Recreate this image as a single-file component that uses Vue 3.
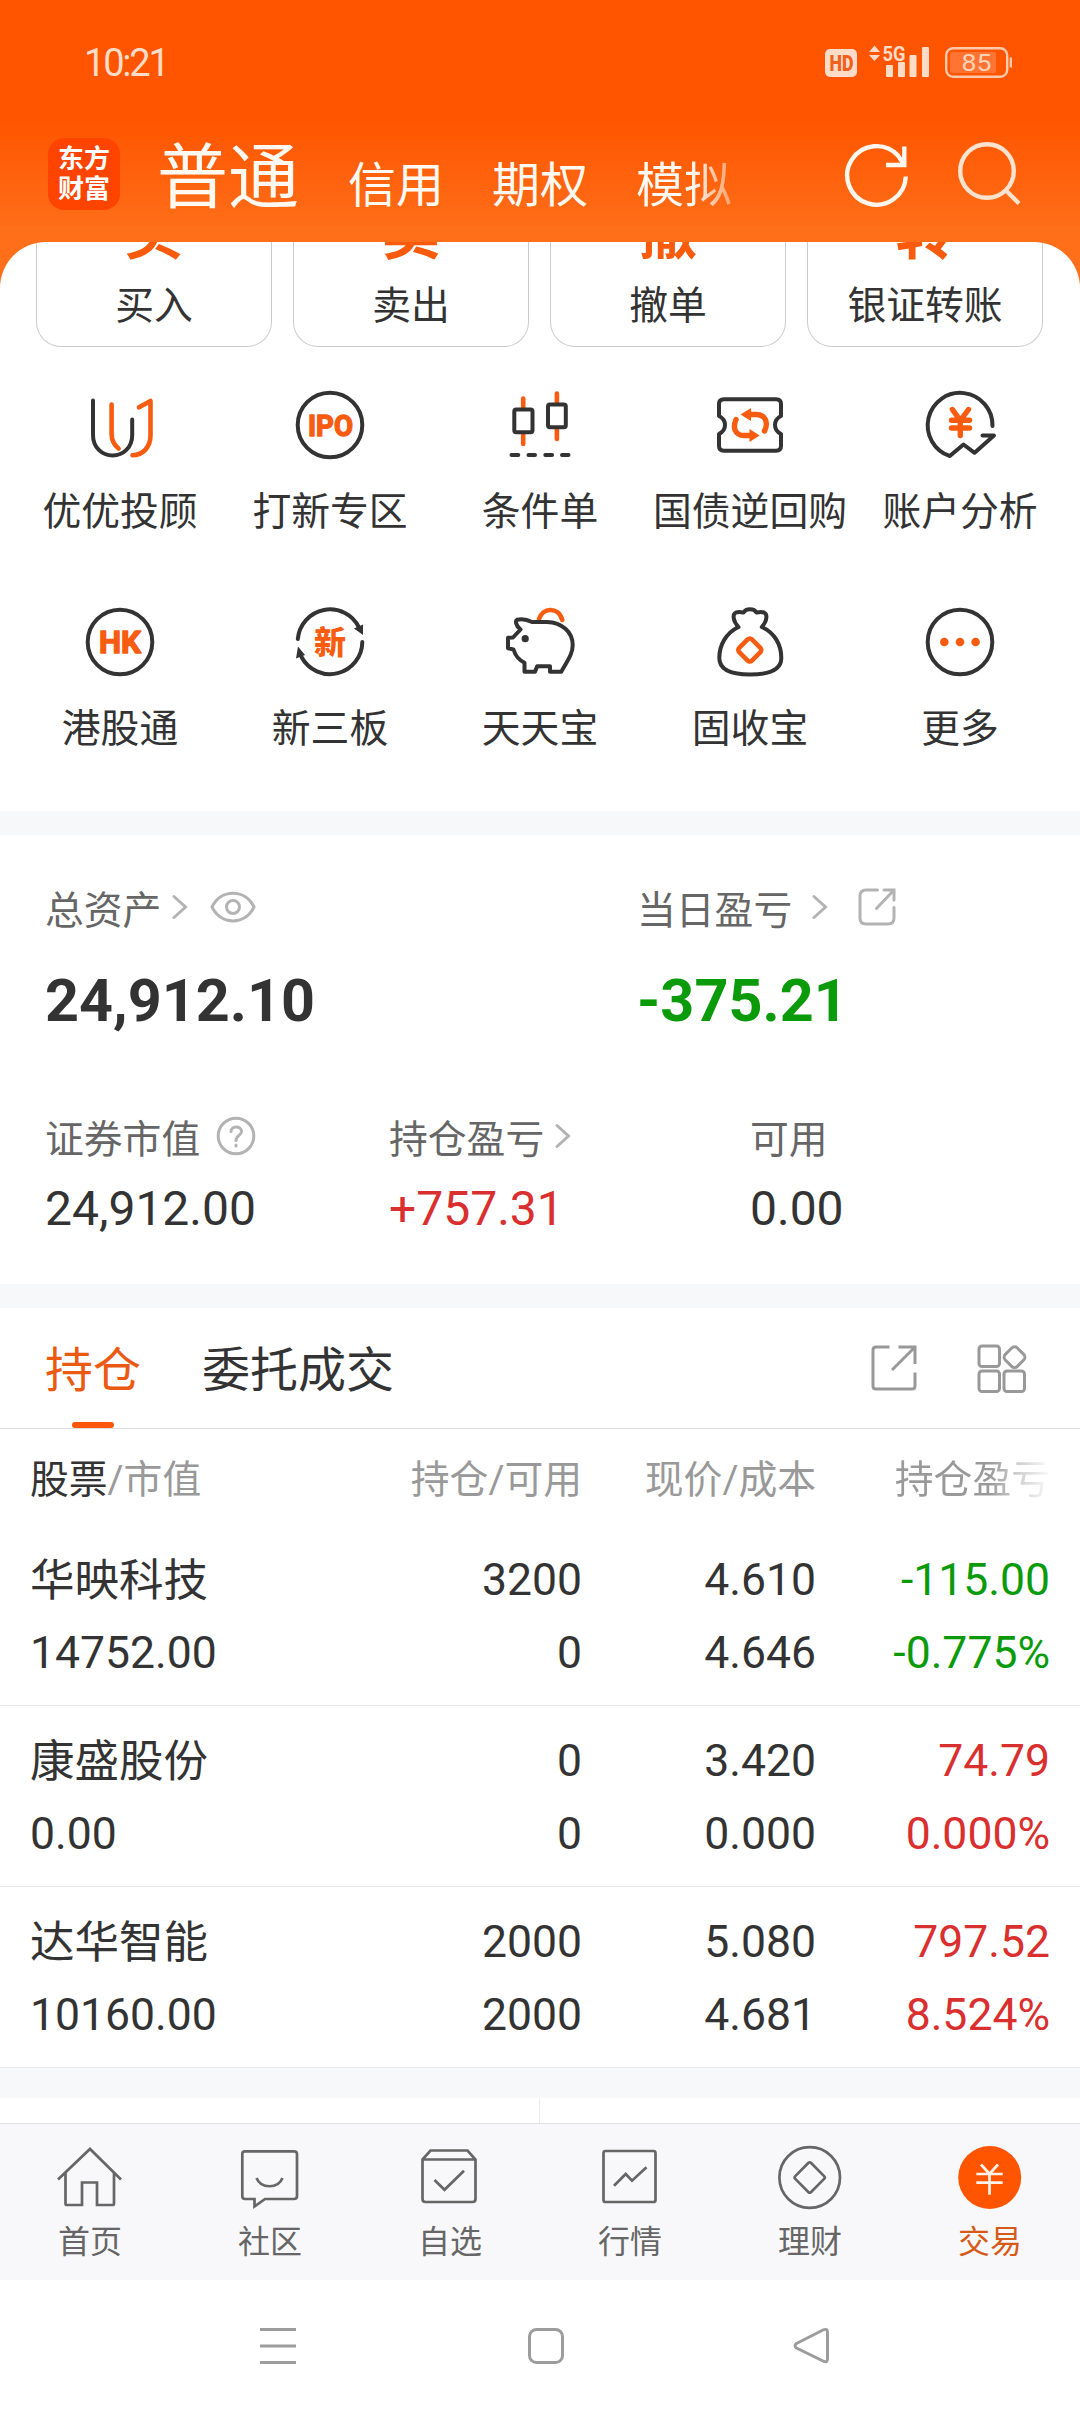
<template>
  <div class="page">
    <header class="top">
      <div class="status">
        <span class="time">10:21</span>
        <svg class="status-icons" width="190" height="40" viewBox="824 42 190 40">
          <rect x="825" y="49" width="32" height="28" rx="5" fill="#ffdcc8" />
          <text x="829.5" y="71" font-size="22" font-weight="900" fill="#f0601c" textLength="24" lengthAdjust="spacingAndGlyphs">HD</text>
          <path d="M869 52l5.5-6.5 5.5 6.5zM869 55h11l-5.500 6z" fill="#ffdcc8" />
          <text x="882.500" y="60.500" font-size="21" font-weight="700" fill="#ffdcc8" textLength="23" lengthAdjust="spacingAndGlyphs">5G</text>
          <g fill="#ffdcc8">
            <rect x="886" y="65" width="7" height="12" rx="1" />
            <rect x="898" y="62" width="7" height="15" rx="1" />
            <rect x="909.500" y="55" width="7" height="22" rx="1" />
            <rect x="922" y="47" width="7" height="30" rx="1" />
          </g>
          <rect x="946.200" y="48.200" width="61" height="28.600" rx="7" fill="none" stroke="#ffc9ab" stroke-width="2.400" />
          <rect x="950" y="52" width="46" height="21" rx="2" fill="#ff7433" />
          <path d="M1010.800 57.500v10" stroke="#ffc9ab" stroke-width="2.400" />
          <text x="961.500" y="71" font-size="24.500" fill="#ffd2b8" textLength="30" lengthAdjust="spacingAndGlyphs">85</text>
        </svg>
      </div>
      <div class="bar">
        <div class="logo"><span>东方</span><span>财富</span></div>
        <nav class="modes">
          <span class="mode main">普通</span>
          <span class="mode">信用</span>
          <span class="mode">期权</span>
          <span class="mode fade">模拟</span>
        </nav>
        <svg class="refresh" width="70" height="70" viewBox="0 0 70 70" fill="none" stroke="#fff6ee" stroke-width="4.400">
          <path d="M64.800 36.500A29.300 29.300 0 1 1 57 15.500L62 23" />
          <path d="M63.300 6.500V25H45" />
        </svg>
        <svg class="search" width="70" height="70" viewBox="0 0 70 70" fill="none" stroke="#ffe3cf" stroke-width="4.400">
          <circle cx="34" cy="31" r="26.800" />
          <path d="M52.500 50L66 63.500" />
        </svg>
      </div>
    </header>

    <main class="body">
      <div class="cards">
        <div v-for="c in cards" :key="c.label" class="card">
          <span class="card-icon">{{ c.icon }}</span>
          <span class="card-label">{{ c.label }}</span>
        </div>
      </div>

      <div class="grid">
        <div class="cell">
          <svg class="ico" viewBox="0 0 80 80">
            <path class="dark" d="M13 15.500V50C13 62.500 22 70.500 32.600 70.500S52.200 62.500 52.200 50V34.500" />
            <path class="hot" d="M31.600 19.500V49c0 6.500 2.500 11 7 14.500M59 22.300l11.500-6.300v34.500C70.500 62 63 70 52.500 70.300" />
          </svg>
          <span>优优投顾</span>
        </div>
        <div class="cell">
          <svg class="ico" viewBox="0 0 80 80">
            <circle class="dark" cx="40" cy="40" r="32.300" />
            <text class="glyph latin" x="18" y="50.700" font-size="30" textLength="45" lengthAdjust="spacingAndGlyphs">IPO</text>
          </svg>
          <span>打新专区</span>
        </div>
        <div class="cell">
          <svg class="ico" viewBox="0 0 80 80">
            <path class="hot wick" d="M23.200 13.500v10M23.200 49v10M56.900 8.500v10M56.900 44v10" />
            <rect class="dark" x="14.300" y="24.500" width="18.200" height="22.800" rx="2" />
            <rect class="dark" x="48" y="19.500" width="17.800" height="22.800" rx="2" />
            <path class="dark" d="M11.500 70h6.800M28.500 70h6.500M45.300 70h6.800M62 70h6.500" />
          </svg>
          <span>条件单</span>
        </div>
        <div class="cell">
          <svg class="ico" viewBox="0 0 80 80">
            <path class="dark" d="M9 19q0-4.700 5-4.700h52q5 0 5 4.700v12q-6 3-6 9t6 9v12q0 4.700-5 4.700H14q-5 0-5-4.700V49q6-3 6-9t-6-9z" />
            <path class="hot bold" d="M37 29.500h9C56 29.500 58.500 38 54.500 46M26 34.500c-3.500 8-1 16 8 16h8" />
            <path class="fill" d="M30.500 29.500L41 23v13zM49.700 50.500L39.500 44v13z" />
          </svg>
          <span>国债逆回购</span>
        </div>
        <div class="cell">
          <svg class="ico" viewBox="0 0 80 80">
            <path class="dark" d="M72.500 41A32.400 32.400 0 1 0 29.800 71L43.500 59.500L54.600 67.800L74 50.500H62.500" />
            <path class="hot yen" d="M32.400 24.500L40.300 35.500L48.500 24.500M31.500 35.300H49.500M31.500 43H49.500M40.300 35.500V50.500" />
          </svg>
          <span>账户分析</span>
        </div>
        <div class="cell">
          <svg class="ico" viewBox="0 0 80 80">
            <circle class="dark" cx="40" cy="40" r="32.300" />
            <text class="glyph latin" x="19" y="51" font-size="31" textLength="42" lengthAdjust="spacingAndGlyphs">HK</text>
          </svg>
          <span>港股通</span>
        </div>
        <div class="cell">
          <svg class="ico" viewBox="0 0 80 80">
            <path class="dark" d="M7.800 37A32.300 32.300 0 0 1 69 25.500M72.300 40A32.300 32.300 0 0 1 11.500 55" />
            <path class="darkfill" d="M64 26.500L73 22.500V33zM15 53L6 56.500L8 44.500z" />
            <text class="glyph" x="24" y="51.500" font-size="32">新</text>
          </svg>
          <span>新三板</span>
        </div>
        <div class="cell">
          <svg class="ico" viewBox="0 0 80 80">
            <path class="hot" d="M39 17C42 6 58 3.500 62.300 18" />
            <path class="dark" d="M8 35.700L13 35.500L20.500 27.500C15 23 15.500 18.500 17 17.800C22 16.500 28 18 32 20H47C62 20.500 72.700 30 72.700 43C72.700 51 69.500 55.500 61.300 69.700H50V64.300H37.200L35 69.700H24.500V60.800C18 57.500 15.500 54 13.500 47.500L8 46.300Z" />
            <circle class="darkfill" cx="25.200" cy="36.700" r="3.600" />
          </svg>
          <span>天天宝</span>
        </div>
        <div class="cell">
          <svg class="ico" viewBox="0 0 80 80">
            <path class="dark" d="M28.500 25C22.500 18.500 22.500 12 26 10.500C29 9.500 31 10 33.500 10.500C36 6 44 6 46.500 10.500C49 10 51 9.500 54 10.500C57.500 12 57.500 18.500 51.800 25C65 31 71.300 43 71.300 56C71.300 66 62 72.500 40 72.500S9.300 66 9.300 56C9.300 43 16 31 28.500 25Z" />
            <rect class="hot" x="30.800" y="39" width="18" height="18" rx="3" transform="rotate(45 39.800 48)" />
          </svg>
          <span>固收宝</span>
        </div>
        <div class="cell">
          <svg class="ico" viewBox="0 0 80 80">
            <circle class="dark" cx="40" cy="40" r="32.300" />
            <circle class="fill" cx="24.300" cy="40" r="4.300" />
            <circle class="fill" cx="40" cy="40" r="4.300" />
            <circle class="fill" cx="55.600" cy="40" r="4.300" />
          </svg>
          <span>更多</span>
        </div>
      </div>
    </main>

    <div class="gap"></div>

    <section class="assets">
      <div class="totals">
        <div class="total">
          <div class="label">
            <span>总资产</span>
            <svg class="chev" viewBox="0 0 16 26"><path d="M2 2.500L13.500 13L2 23.500" /></svg>
            <svg class="eye" width="46" height="32" viewBox="0 0 46 32">
              <path d="M2 16C11-2.500 35-2.500 44 16C35 34.500 11 34.500 2 16Z" />
              <circle cx="23" cy="16" r="6.500" />
            </svg>
          </div>
          <div class="sum">24,912.10</div>
        </div>
        <div class="total">
          <div class="label">
            <span>当日盈亏</span>
            <svg class="chev wide" viewBox="0 0 16 26"><path d="M2 2.500L13.500 13L2 23.500" /></svg>
            <svg class="share" width="38" height="38" viewBox="0 0 38 38">
              <path d="M19.500 2H8Q2 2 2 8V30Q2 36 8 36H30Q36 36 36 30V19.500M26 2H36V12M35.500 2.500L18.500 20.500" />
            </svg>
          </div>
          <div class="sum green">-375.21</div>
        </div>
      </div>
      <div class="details">
        <div class="detail">
          <div class="label">
            <span>证券市值</span>
            <svg class="help" width="40" height="40" viewBox="0 0 40 40">
              <circle cx="20" cy="20" r="17.800" />
              <path d="M15 15.500C15 9.500 25.500 9.500 25.500 15.500C25.500 19.500 20 19.500 20 24.500M20 29v1" />
            </svg>
          </div>
          <div class="value">24,912.00</div>
        </div>
        <div class="detail">
          <div class="label">
            <span>持仓盈亏</span>
            <svg class="chev" viewBox="0 0 16 26"><path d="M2 2.500L13.500 13L2 23.500" /></svg>
          </div>
          <div class="value red">+757.31</div>
        </div>
        <div class="detail">
          <div class="label"><span>可用</span></div>
          <div class="value">0.00</div>
        </div>
      </div>
    </section>

    <div class="gap"></div>

    <section class="holdings">
      <div class="tabs">
        <span class="tab on">持仓</span>
        <span class="tab">委托成交</span>
        <svg class="tab-share" width="46" height="46" viewBox="0 0 46 46">
          <path d="M18.500 2H5Q2 2 2 5V41Q2 44 5 44H41Q44 44 44 41V27.500M27.500 2H44V19M43 3L21 25" />
        </svg>
        <svg class="tab-grid" width="50" height="50" viewBox="0 0 50 50">
          <rect x="2" y="2" width="20.500" height="20.500" rx="3" />
          <rect x="2" y="27" width="20.500" height="20.500" rx="3" />
          <rect x="27" y="27" width="20.500" height="20.500" rx="3" />
          <rect x="29" y="4.700" width="17" height="17" rx="4" transform="rotate(45 37.500 13.200)" />
        </svg>
      </div>
      <div class="row head">
        <span class="first"><b>股票</b>/市值</span>
        <span>持仓/可用</span>
        <span>现价/成本</span>
        <span class="head-fade">持仓盈亏</span>
      </div>
      <div v-for="s in stocks" :key="s.name" class="row stock">
        <div class="first"><p class="name">{{ s.name }}</p><p>{{ s.worth }}</p></div>
        <div><p>{{ s.amount }}</p><p>{{ s.usable }}</p></div>
        <div><p>{{ s.price }}</p><p>{{ s.cost }}</p></div>
        <div :class="s.tone"><p>{{ s.profit }}</p><p>{{ s.rate }}</p></div>
      </div>
      <div class="after"></div>
      <div class="next"><i></i></div>
    </section>

    <nav class="tabbar">
      <div class="item">
        <svg viewBox="0 0 72 72"><path d="M4 37.500L36 7L67 37.500M11.500 31V61.500Q11.500 63 13 63H28V40.500H43V63H58.500Q60 63 60 61.500V31" /></svg>
        <span>首页</span>
      </div>
      <div class="item">
        <svg viewBox="0 0 72 72"><path d="M11 9.300H60Q63 9.300 63 12V54Q63 57 60 57H31L20.500 64.500V57H11Q8.300 57 8.300 54V12Q8.300 9.300 11 9.300ZM22.500 36C27 47 44 47 48.500 36" /></svg>
        <span>社区</span>
      </div>
      <div class="item">
        <svg viewBox="0 0 72 72"><path d="M8.500 17.500L16.500 8.500H53.500L61.500 17.500V57Q61.500 60 58.500 60H11.500Q8.500 60 8.500 57ZM8.500 17.500H61.500M20.500 38L30.500 47.800L50 28.700" /></svg>
        <span>自选</span>
      </div>
      <div class="item">
        <svg viewBox="0 0 72 72"><rect x="9.500" y="9" width="52" height="51" rx="2" /><path d="M20 43.700L31.700 32L38 38.700L52.500 25.300" /></svg>
        <span>行情</span>
      </div>
      <div class="item">
        <svg viewBox="0 0 72 72"><circle cx="35.700" cy="35.500" r="30.300" /><rect x="24.500" y="24.300" width="22.400" height="22.400" rx="2" transform="rotate(45 35.700 35.500)" /></svg>
        <span>理财</span>
      </div>
      <div class="item active">
        <svg viewBox="0 0 72 72"><circle cx="35.700" cy="35.500" r="31.500" /><path d="M27 22.500L35.500 32L44 22.500M22.300 32H48.700M22.300 40.700H48.700M35.500 32V52.700" /></svg>
        <span>交易</span>
      </div>
    </nav>

    <div class="sysbar">
      <svg width="1080" height="132" viewBox="0 2280 1080 132">
        <path d="M260 2329.500h36M260 2346h36M260 2362.500h36" />
        <rect x="529.500" y="2329.500" width="33" height="33" rx="7" />
        <path d="M796.500 2343.500L823 2330Q827.500 2328 827.500 2332.500V2358.500Q827.500 2363.500 823 2361L796.500 2348Q793.500 2346 796.500 2343.500Z" />
      </svg>
    </div>
  </div>
</template>

<script setup>
const cards = [
  { icon: '买', label: '买入' },
  { icon: '卖', label: '卖出' },
  { icon: '撤', label: '撤单' },
  { icon: '转', label: '银证转账' }
];

const stocks = [
  { name: '华映科技', worth: '14752.00', amount: '3200', usable: '0', price: '4.610', cost: '4.646', profit: '-115.00', rate: '-0.775%', tone: 'green' },
  { name: '康盛股份', worth: '0.00', amount: '0', usable: '0', price: '3.420', cost: '0.000', profit: '74.79', rate: '0.000%', tone: 'red' },
  { name: '达华智能', worth: '10160.00', amount: '2000', usable: '2000', price: '5.080', cost: '4.681', profit: '797.52', rate: '8.524%', tone: 'red' }
];
</script>

<style>
body {
  margin: 0;
  background: #fff;
}
</style>

<style scoped>
.page {
  width: 1080px;
  height: 2412px;
  overflow: hidden;
  background: #fff;
  color: #333;
  font-family: Roboto, "Noto Sans CJK SC", sans-serif;
  font-size: 38.8px;
}

svg {
  display: block;
  flex: none;
}

/* Header */
.top {
  height: 290px;
  background: linear-gradient(#ff5500 0, #ff5500 120px, #ff6f1a 235px);
}

.status {
  height: 122px;
  display: flex;
  align-items: center;
  justify-content: space-between;
  padding: 2px 66px 0 84px;
  box-sizing: border-box;
}

.time {
  padding-top: 2px;
  font-size: 38px;
  letter-spacing: -2.2px;
  color: #ffdcc8;
}

.bar {
  height: 120px;
  display: flex;
  align-items: flex-start;
}

.logo {
  width: 72px;
  height: 72px;
  margin: 16px 0 0 48px;
  box-sizing: border-box;
  padding-top: 6px;
  border-radius: 16px;
  background: #ff4400;
  color: #fff;
  font-size: 26px;
  font-weight: 700;
  line-height: 30px;
  display: flex;
  flex-direction: column;
  align-items: center;
}

.modes {
  display: flex;
  align-items: baseline;
  width: 686px;
  margin-left: 37px;
  padding-top: 14px;
  color: #fff9f2;
}

.mode {
  flex: none;
  font-size: 48px;
  line-height: 84px;
  width: 96px;
  margin-right: 48px;
}

.mode.main {
  font-size: 71px;
  width: 143px;
}

.mode.fade {
  background: linear-gradient(90deg, #fff9f2 58%, rgba(255, 249, 242, 0.4) 100%);
  -webkit-background-clip: text;
  background-clip: text;
  color: transparent;
}

.refresh {
  margin-top: 18px;
  margin-left: -2px;
}

.search {
  margin: 18px 0 0 42px;
}

/* White sheet over the header */
.body {
  position: relative;
  height: 569px;
  margin-top: -48px;
  border-radius: 46px 46px 0 0;
  background: #fff;
  overflow: hidden;
}

.cards {
  display: flex;
  gap: 21px;
  padding: 0 37px 0 36px;
}

.card {
  flex: 1;
  height: 105px;
  box-sizing: border-box;
  border: 1.5px solid #ccc;
  border-top: 0;
  border-radius: 0 0 25px 25px;
  display: flex;
  flex-direction: column;
  align-items: center;
}

.card-icon {
  height: 60px;
  margin-top: -38px;
  font-size: 59px;
  font-weight: 700;
  line-height: 60px;
  color: #fa5a0c;
}

.card-label {
  margin-top: 20px;
  line-height: 44px;
}

.grid {
  display: grid;
  grid-template-columns: repeat(5, 210px);
  grid-auto-rows: 217px;
  padding: 38px 15px 0;
}

.cell {
  display: flex;
  flex-direction: column;
  align-items: center;
  white-space: nowrap;
}

.cell span {
  margin-top: 22px;
  line-height: 50px;
}

.ico {
  width: 80px;
  height: 80px;
}

.dark,
.hot {
  fill: none;
  stroke: #333;
  stroke-width: 4;
  stroke-linecap: round;
  stroke-linejoin: round;
}

.hot {
  stroke: #f75c10;
  stroke-width: 4.6;
}

.hot.bold,
.hot.yen {
  stroke-width: 5.4;
}

.darkfill {
  fill: #333;
}

.fill,
.glyph {
  fill: #f75c10;
}

.glyph {
  font-weight: 900;
}

.glyph.latin {
  font-weight: 700;
  stroke: #f75c10;
  stroke-width: 1.4;
  stroke-linejoin: round;
}

.gap {
  height: 24px;
  background: #f7f8fa;
}

/* Assets */
.assets {
  height: 449px;
  padding-left: 45px;
}

.totals {
  display: flex;
  padding-top: 42px;
}

.total {
  flex: none;
  width: 592px;
}

.total:last-child {
  width: 400px;
}

.label {
  display: flex;
  align-items: center;
  height: 60px;
  color: #666;
}

.label span {
  margin-top: -1px;
}

.label svg {
  fill: none;
  stroke: #b3b3b3;
  stroke-width: 3;
  stroke-linecap: round;
}

.label .chev {
  width: 16px;
  height: 26px;
  margin-left: 11px;
}

.label .chev.wide {
  margin-left: 20px;
}

.label .eye {
  margin-left: 22px;
}

.label .share {
  margin-left: 30px;
}

.label .help {
  margin-left: 16px;
}

.sum {
  margin-top: 28px;
  font-size: 59.3px;
  font-weight: 700;
  line-height: 72px;
}

.details {
  display: flex;
  padding-top: 69px;
}

.detail {
  flex: none;
  width: 344px;
}

.detail:nth-child(2) {
  width: 361px;
}

.detail:last-child {
  width: 200px;
}

.value {
  margin-top: 15px;
  font-size: 48px;
  line-height: 56px;
}

.green {
  color: #0a9a0a;
}

.red {
  color: #d92f2f;
}

/* Holdings */
.tabs {
  display: flex;
  align-items: center;
  height: 121px;
  box-sizing: border-box;
  padding: 0 53px 0 45px;
  border-bottom: 1px solid #ddd;
}

.tab {
  position: relative;
  margin-right: 61px;
  padding-top: 5px;
  font-size: 48px;
  line-height: 115px;
}

.tab.on {
  color: #ea5a12;
}

.tab.on::after {
  content: "";
  position: absolute;
  left: 27px;
  bottom: 0;
  width: 42px;
  height: 6px;
  border-radius: 3px;
  background: #fc560a;
}

.tabs svg {
  fill: none;
  stroke: #999;
  stroke-width: 3;
}

.tab-share {
  margin-left: auto;
}

.tab-grid {
  margin: 2px 0 0 60px;
}

.row {
  display: grid;
  grid-template-columns: 301px 251px 234px 234px;
  padding: 0 30px;
  text-align: right;
}

.first {
  text-align: left;
}

.head {
  height: 96px;
  line-height: 102px;
  color: #999;
}

.head b {
  font-weight: 400;
  color: #333;
}

.head-fade {
  background: linear-gradient(90deg, #999 74%, rgba(153, 153, 153, 0.55) 84%, rgba(153, 153, 153, 0.08) 99%);
  -webkit-background-clip: text;
  background-clip: text;
  color: transparent;
}

.stock {
  height: 181px;
  box-sizing: border-box;
  padding-top: 19px;
  border-bottom: 1px solid #eaeaea;
  font-size: 44.5px;
  line-height: 73px;
}

.stock p {
  margin: 0;
}

.stock .name {
  padding-top: 1px;
  margin-bottom: -1px;
}

.after {
  height: 30px;
  background: #f7f8fa;
}

.next {
  display: flex;
  justify-content: center;
  height: 25px;
}

.next i {
  width: 1px;
  margin-right: 2px;
  background: #eaeaea;
}

/* Bottom bars */
.tabbar {
  display: flex;
  height: 157px;
  box-sizing: border-box;
  border-top: 1px solid #e0e0e0;
  background: #f8f8fa;
}

.item {
  flex: 1;
  display: flex;
  flex-direction: column;
  align-items: center;
  padding-top: 18px;
  font-size: 32px;
  line-height: 40px;
  color: #666;
}

.item svg {
  width: 72px;
  height: 72px;
  fill: none;
  stroke: #666;
  stroke-width: 2.7;
}

.item span {
  margin-top: 8px;
}

.item.active {
  color: #d65a18;
}

.item.active circle {
  fill: #ff5500;
  stroke: none;
}

.item.active path {
  stroke: #fff3ea;
}

.sysbar {
  height: 132px;
  background: #fff;
}

.sysbar svg {
  fill: none;
  stroke: #9c9c9c;
  stroke-width: 3;
}
</style>
